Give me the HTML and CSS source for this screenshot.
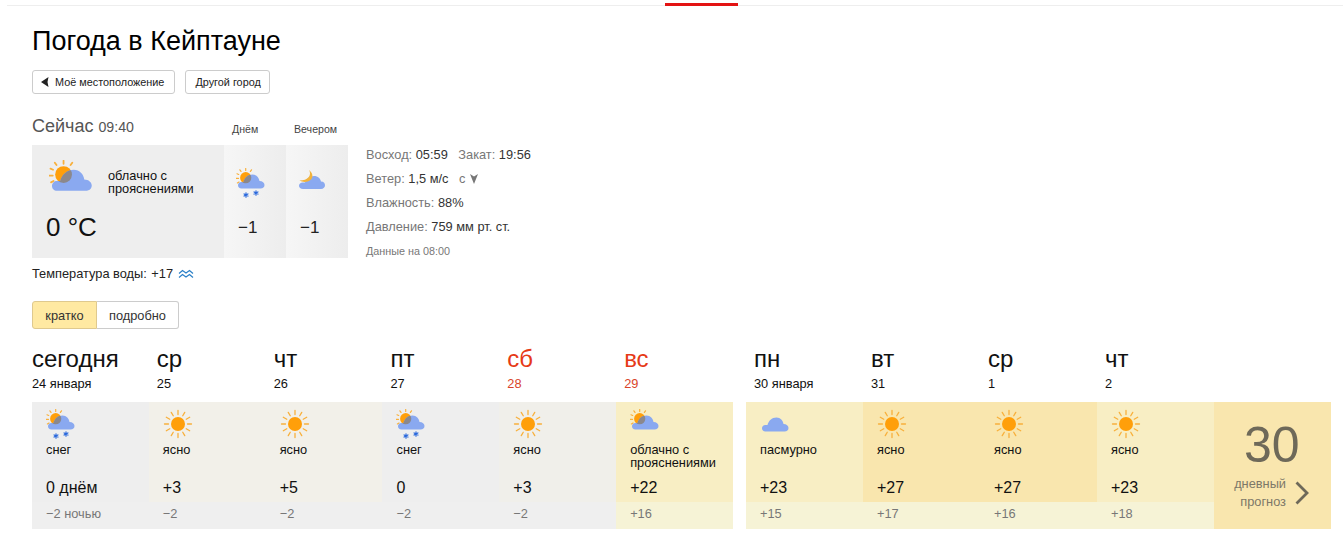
FILE: index.html
```html
<!DOCTYPE html>
<html lang="ru">
<head>
<meta charset="utf-8">
<title>Погода в Кейптауне</title>
<link rel="stylesheet" href="styles.css">
</head>
<body>
<svg class="sprite" xmlns="http://www.w3.org/2000/svg">
  <defs>
    <clipPath id="cloud-clip"><path d="M5.500 20.500C3.200 20.500 2 19 2 17.300 2 15.400 3.400 14 5.300 14L7.500 14C8.500 10 11.800 6.500 16.500 6.500 20.500 6.500 23 9.500 23.500 13 26.500 13 28.500 15 28.500 17 28.500 19 27 20.500 24.500 20.500Z"/></clipPath>
    <symbol id="rays-small" viewBox="0 0 30 30">
      <g stroke="#f8b03c" stroke-width="1.200" stroke-linecap="round">
        <path d="M9.700 2.500V.5M5 3.400 3.900 1.800M14.400 3.400 15.500 1.800M2.700 6.500 1 5.800M2.500 10.400H.3M3 14 1.400 14.900"/>
      </g>
    </symbol>
    <symbol id="suncloud" viewBox="0 0 30 30">
      <use href="#rays-small"/>
      <circle cx="9.700" cy="9.700" r="5.600" fill="#ff9f0a"/>
      <path fill="#8aa9f0" d="M5.500 20.500C3.200 20.500 2 19 2 17.300 2 15.400 3.400 14 5.300 14L7.500 14C8.500 10 11.800 6.500 16.500 6.500 20.500 6.500 23 9.500 23.500 13 26.500 13 28.500 15 28.500 17 28.500 19 27 20.500 24.500 20.500Z"/>
      <circle cx="9.700" cy="9.700" r="5.600" fill="#8b888c" clip-path="url(#cloud-clip)"/>
    </symbol>
    <symbol id="snow" viewBox="0 0 30 30">
      <use href="#suncloud"/>
      <g stroke="#2a68dc" stroke-width="1.200" stroke-linecap="round">
        <path d="M10 24.800V29.200M8.100 25.900 11.900 28.100M8.100 28.100 11.900 25.900"/>
        <path d="M20 22.800V27.200M18.100 23.900 21.900 26.100M18.100 26.100 21.900 23.900"/>
      </g>
    </symbol>
    <symbol id="sun" viewBox="0 0 30 30">
      <circle cx="15" cy="15" r="7" fill="#ff9f0a"/>
      <g stroke="#f8b03c" stroke-width="1.300" stroke-linecap="round">
        <path d="M15 5.500V1.500M19.750 6.770 21.750 3.310M23.230 10.250 26.690 8.250M24.500 15H28.500M23.230 19.750 26.690 21.750M19.750 23.230 21.750 26.690M15 24.500V28.500M10.250 23.230 8.250 26.690M6.770 19.750 3.310 21.750M5.500 15H1.500M6.770 10.250 3.310 8.250M10.250 6.770 8.250 3.310"/>
      </g>
    </symbol>
    <symbol id="cloudy" viewBox="0 0 30 30">
      <path fill="#8aa9f0" d="M5.500 22.500C3.200 22.500 2 21 2 19.300 2 17.400 3.400 16 5.300 16L7.500 16C8.500 12 11.800 8.500 16.500 8.500 20.500 8.500 23 11.500 23.500 15 26.500 15 28.500 17 28.500 19 28.500 21 27 22.500 24.500 22.500Z"/>
    </symbol>
    <symbol id="moon" viewBox="0 0 30 30">
      <path fill="#8aa9f0" d="M5 21C2.500 21 1 19.500 1 17.800 1 15.900 2.600 14.500 4.600 14.500L7 14.500C8 11 11.500 8 16 8 20 8 22.500 10.500 23 13.500 26 13.500 27 15.500 27 17.300 27 19.300 25.500 21 23 21Z"/>
      <path fill="#f2b33c" d="M11 2C15 5 15.500 9.500 12.500 12 9.500 14.500 4.500 14.500 1.500 12.500 5.500 12.500 9 11.500 10.800 9 12.300 7 12.500 4.500 11 2Z"/>
    </symbol>
  </defs>
</svg>

<header class="topline"><div class="topline-mark"></div></header>

<main class="page">
  <h1 class="title">Погода в Кейптауне</h1>
  <div class="actions">
    <button class="btn btn-loc" type="button">
      <svg class="btn-arrow" viewBox="0 0 8 10"><path d="M0 5 7.500 0 6.500 5 7.500 10Z" fill="#222"/></svg>Моё местоположение
    </button>
    <button class="btn btn-city" type="button">Другой город</button>
  </div>

  <section class="now">
    <div class="now-left">
      <div class="now-head">
        <div class="now-title">Сейчас <span class="now-time">09:40</span></div>
        <div class="now-part">Днём</div>
        <div class="now-part">Вечером</div>
      </div>
      <div class="now-panel">
        <div class="now-main">
          <div class="now-cond">
            <svg class="ico-big"><use href="#suncloud"/></svg>
            <span class="now-text">облачно с прояснениями</span>
          </div>
          <div class="now-temp">0 °C</div>
        </div>
        <div class="now-cell">
          <svg class="ico"><use href="#snow"/></svg>
          <div class="now-cell-temp">−1</div>
        </div>
        <div class="now-cell">
          <svg class="ico"><use href="#moon"/></svg>
          <div class="now-cell-temp">−1</div>
        </div>
      </div>
      <div class="water">Температура воды: <span class="water-val">+17</span>
        <svg class="water-ico" viewBox="0 0 16 10" fill="none" stroke="#2b80c8" stroke-width="1.200">
          <path d="M1 4.500 4.500 1.500 8 4 11.500 1.500 15 4.500M1 8.500 4.500 5.500 8 8 11.500 5.500 15 8.500"/>
        </svg>
      </div>
    </div>
    <div class="details">
      <div class="row"><span class="lbl">Восход:</span> 05:59 <span class="lbl gap">Закат:</span> 19:56</div>
      <div class="row"><span class="lbl">Ветер:</span> 1,5 м/с <span class="lbl gap">с</span> <svg class="wind" viewBox="0 0 8 10"><path d="M0 0 4 2.500 8 0 4 10Z" fill="#777"/></svg></div>
      <div class="row"><span class="lbl">Влажность:</span> 88%</div>
      <div class="row"><span class="lbl">Давление:</span> 759 мм рт. ст.</div>
      <div class="row note">Данные на 08:00</div>
    </div>
  </section>

  <div class="tabs">
    <div class="tab tab-on">кратко</div>
    <div class="tab">подробно</div>
  </div>

  <section class="forecast">
    <div class="group group-a">
      <article class="day day-first">
        <div class="day-head"><div class="dow">сегодня</div><div class="date">24 января</div></div>
        <div class="day-top bg-grey"><svg class="ico"><use href="#snow"/></svg><div class="cond">снег</div><div class="hi">0 днём</div></div>
        <div class="day-low bg-lowgrey">−2 ночью</div>
      </article>
      <article class="day">
        <div class="day-head"><div class="dow">ср</div><div class="date">25</div></div>
        <div class="day-top bg-warm"><svg class="ico"><use href="#sun"/></svg><div class="cond">ясно</div><div class="hi">+3</div></div>
        <div class="day-low bg-lowgrey">−2</div>
      </article>
      <article class="day">
        <div class="day-head"><div class="dow">чт</div><div class="date">26</div></div>
        <div class="day-top bg-warm"><svg class="ico"><use href="#sun"/></svg><div class="cond">ясно</div><div class="hi">+5</div></div>
        <div class="day-low bg-lowgrey">−2</div>
      </article>
      <article class="day">
        <div class="day-head"><div class="dow">пт</div><div class="date">27</div></div>
        <div class="day-top bg-grey"><svg class="ico"><use href="#snow"/></svg><div class="cond">снег</div><div class="hi">0</div></div>
        <div class="day-low bg-lowgrey">−2</div>
      </article>
      <article class="day weekend">
        <div class="day-head"><div class="dow">сб</div><div class="date">28</div></div>
        <div class="day-top bg-warm2"><svg class="ico"><use href="#sun"/></svg><div class="cond">ясно</div><div class="hi">+3</div></div>
        <div class="day-low bg-lowgrey">−2</div>
      </article>
      <article class="day weekend">
        <div class="day-head"><div class="dow">вс</div><div class="date">29</div></div>
        <div class="day-top bg-y1"><svg class="ico"><use href="#suncloud"/></svg><div class="cond">облачно с прояснениями</div><div class="hi">+22</div></div>
        <div class="day-low bg-lowy">+16</div>
      </article>
    </div>
    <div class="group group-b">
      <article class="day">
        <div class="day-head"><div class="dow">пн</div><div class="date">30 января</div></div>
        <div class="day-top bg-y1"><svg class="ico"><use href="#cloudy"/></svg><div class="cond">пасмурно</div><div class="hi">+23</div></div>
        <div class="day-low bg-lowy">+15</div>
      </article>
      <article class="day">
        <div class="day-head"><div class="dow">вт</div><div class="date">31</div></div>
        <div class="day-top bg-y2"><svg class="ico"><use href="#sun"/></svg><div class="cond">ясно</div><div class="hi">+27</div></div>
        <div class="day-low bg-lowy">+17</div>
      </article>
      <article class="day">
        <div class="day-head"><div class="dow">ср</div><div class="date">1</div></div>
        <div class="day-top bg-y2"><svg class="ico"><use href="#sun"/></svg><div class="cond">ясно</div><div class="hi">+27</div></div>
        <div class="day-low bg-lowy">+16</div>
      </article>
      <article class="day">
        <div class="day-head"><div class="dow">чт</div><div class="date">2</div></div>
        <div class="day-top bg-y1"><svg class="ico"><use href="#sun"/></svg><div class="cond">ясно</div><div class="hi">+23</div></div>
        <div class="day-low bg-lowy">+18</div>
      </article>
      <aside class="more">
        <div class="more-num">30</div>
        <div class="more-foot">
          <div class="more-text">дневный<br>прогноз</div>
          <svg class="more-arrow" viewBox="0 0 14 24" fill="none" stroke="#6e6959" stroke-width="2.800"><path d="M1.500 1.500 12 12 1.500 22.500"/></svg>
        </div>
      </aside>
    </div>
  </section>
</main>
</body>
</html>
```

FILE: styles.css
```css
* { box-sizing: border-box; }

html, body { margin: 0; padding: 0; }

body {
  background: #fff;
  color: #000;
  font-family: "Liberation Sans", Arial, sans-serif;
  font-size: 12.800px;
}

.sprite { display: block; width: 0; height: 0; overflow: hidden; }

.topline {
  height: 6px;
  margin-left: 7px;
  border-bottom: 1px solid #eee;
  padding: 3px 0 0 658px;
}
.topline-mark { width: 73px; height: 3px; background: #e31313; }

.page { padding: 0 12px 0 32px; }

.title {
  margin: 0;
  padding-top: 20px;
  font-size: 27px;
  line-height: 31px;
  font-weight: 400;
}

.actions { display: flex; gap: 10px; margin-top: 13px; }

.btn {
  display: flex;
  align-items: center;
  height: 24px;
  padding: 0 9px;
  background: #fff;
  border: 1px solid #ccc;
  border-radius: 3px;
  color: #222;
  font: 10.850px "Liberation Sans", Arial, sans-serif;
}
.btn-loc { padding: 0 10px 0 8px; }
.btn-city { padding-left: 9px; padding-right: 8px; }
.btn-arrow { width: 8px; height: 10px; margin: 0 6px 0 0; }

.now { display: flex; gap: 18px; margin-top: 20px; }
.now-left { width: 316px; }

.now-head { display: flex; align-items: flex-end; height: 31px; }
.now-title {
  width: 192px;
  padding-bottom: 8px;
  color: #555;
  font-size: 18px;
  line-height: 20px;
}
.now-time { font-size: 14.200px; color: #555; }
.now-part {
  width: 62px;
  padding: 0 0 9px 8px;
  color: #444;
  font-size: 10.600px;
  line-height: 13px;
}

.now-panel { display: flex; height: 113px; }
.now-main { width: 192px; background: #eee; padding: 15px 0 0 16px; }
.now-cond { display: flex; align-items: center; height: 45px; }
.ico-big { width: 45px; height: 45px; display: block; margin: -1px 0 0 1px; }
.now-text {
  width: 100px;
  margin: 0 0 0 14px;
  color: #111;
  line-height: 12.500px;
}
.now-temp {
  margin: 7px 0 0 -2px;
  font-size: 26px;
  line-height: 30px;
  color: #111;
}
.now-cell {
  width: 62px;
  padding: 23px 0 0 12px;
  background: linear-gradient(to right, #f6f6f6, #ededed);
}
.ico { display: block; width: 30px; height: 30px; }
.now-cell-temp {
  margin: 20px 0 0 2px;
  font-size: 17px;
  line-height: 20px;
  color: #222;
}

.water { margin-top: 8px; line-height: 15px; color: #222; display: flex; align-items: center; white-space: pre; }
.water-val { margin-left: 1px; }
.water-ico { width: 16px; height: 10px; margin-left: 5px; }

.details { padding-top: 29px; color: #333; }
.row { height: 24px; line-height: 24px; }
.lbl { color: #777; }
.gap { margin-left: 7px; }
.wind { display: inline-block; width: 8px; height: 10px; margin-left: 1px; vertical-align: -1px; }
.note { color: #777; font-size: 10.800px; }

.tabs { display: flex; width: 147px; height: 28px; margin-top: 20px; }
.tab {
  display: flex;
  align-items: center;
  justify-content: center;
  flex: 1 1 auto;
  border: 1px solid #ccc;
  border-left: 0;
  border-radius: 0 3px 3px 0;
  color: #333;
}
.tab-on {
  flex: 0 0 65px;
  background: #ffe9a2;
  border: 1px solid #dfc98e;
  border-radius: 3px 0 0 3px;
}

.forecast { display: flex; gap: 13px; margin-top: 16px; }
.group { display: flex; }
.group-a { width: 701px; }
.group-b { width: 585px; }

.day { flex: 1 1 0; min-width: 0; }
.group-b .day, .more { flex: 0 0 117px; }
.day-head { height: 57px; padding-left: 8px; }
.day-first .day-head { padding-left: 0; }

.dow { font-size: 24px; line-height: 28px; color: #111; }
.date { margin-top: 3px; line-height: 16px; color: #111; }
.weekend .dow { color: #e63a17; }
.weekend .date { color: #d9442a; }

.day-top { height: 100px; padding: 7px 0 0 14px; display: flex; flex-direction: column; }
.cond { height: 29px; margin-top: 4px; line-height: 13px; color: #111; }
.hi { margin-top: 7px; font-size: 16px; line-height: 18px; color: #111; }

.day-low { height: 27px; padding-left: 14px; line-height: 24px; color: #777; }

.bg-grey { background: #eeeeee; }
.bg-warm { background: #f2f0e9; }
.bg-warm2 { background: #f0efea; }
.bg-y1 { background: #f8eec4; }
.bg-y2 { background: #f9e6ae; }
.bg-lowgrey { background: #efefef; }
.bg-lowy { background: #f6f3d6; }

.more {
  margin-top: 57px;
  height: 127px;
  background: #f9e6ae;
  color: #6e6959;
}
.more-num {
  padding: 14px 0 0 30px;
  font-size: 50px;
  line-height: 58px;
}
.more-foot { display: flex; align-items: center; margin-top: 1px; }
.more-text {
  width: 72px;
  text-align: right;
  line-height: 18px;
  color: #7d7868;
}
.more-arrow { width: 14px; height: 24px; margin-left: 9px; }
```
